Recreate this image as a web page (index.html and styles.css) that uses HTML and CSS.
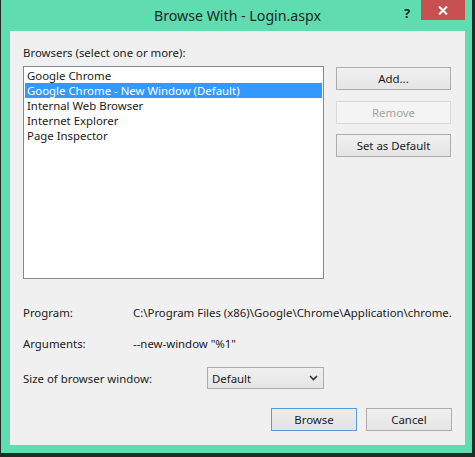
FILE: index.html
```html
<!DOCTYPE html>
<html lang="en">
<head>
    <meta charset="UTF-8">
    <title>Browse With - Login.aspx</title>
<link rel="stylesheet" href="styles.css">
</head>
<body>
    <div class="window">
        <div class="titlebar">
            <span></span>
            <div class="title">Browse With - Login.aspx</div>
            <div class="caption-buttons">
                <span class="help">?</span>
                <span class="close">
                    <svg width="10" height="9" viewBox="0 0 10 9">
                        <path d="M1 0.5 L9 8.5 M9 0.5 L1 8.5" stroke="#fff" stroke-width="2" fill="none"/>
                    </svg>
                </span>
            </div>
        </div>

        <div class="client">
            <div class="label">Browsers (select one or more):</div>

            <div class="browsers">
                <ul class="listbox">
                    <li>Google Chrome</li>
                    <li class="selected">Google Chrome - New Window (Default)</li>
                    <li>Internal Web Browser</li>
                    <li>Internet Explorer</li>
                    <li>Page Inspector</li>
                </ul>
                <div class="side-buttons">
                    <button class="btn add">Add...</button>
                    <button class="btn remove" disabled>Remove</button>
                    <button class="btn set-default">Set as Default</button>
                </div>
            </div>

            <div class="fields">
                <div class="field program">
                    <span class="field-label">Program:</span>
                    <span class="field-value">C:\Program Files (x86)\Google\Chrome\Application\chrome.</span>
                </div>
                <div class="field arguments">
                    <span class="field-label">Arguments:</span>
                    <span class="field-value">--new-window "%1"</span>
                </div>
                <div class="field size">
                    <span class="field-label">Size of browser window:</span>
                    <div class="combo">
                        <span>Default</span>
                        <svg width="9" height="6" viewBox="0 0 9 6">
                            <path d="M1 1 L4.5 4.5 L8 1" stroke="#333" stroke-width="1.6" fill="none"/>
                        </svg>
                    </div>
                </div>
            </div>

            <div class="footer">
                <button class="btn primary">Browse</button>
                <button class="btn">Cancel</button>
            </div>
        </div>
    </div>
</body>
</html>
```

FILE: styles.css
```css
/* dialog chrome */
body {
    margin: 0;
    width: 475px;
    height: 457px;
    background-color: #1f2d27;
    font-family: 'Noto Sans', 'Open Sans', sans-serif;
    font-size: 11.4px;
    color: #1a1a1a;
    overflow: hidden;
}

.window {
    margin-left: 1px;
    width: 471px;
    height: 453px;
    box-sizing: border-box;
    padding: 0 7px 0 9px;
    background-color: #5fdcb0;
}

.titlebar {
    height: 31px;
    display: grid;
    grid-template-columns: 1fr auto 1fr;
    align-items: start;
}

.title {
    font-size: 14.2px;
    line-height: 31px;
    color: #1c2b25;
}

.caption-buttons {
    justify-self: end;
    display: flex;
    align-items: flex-start;
}

.help {
    width: 28px;
    padding-top: 4px;
    text-align: center;
    font-weight: bold;
    font-size: 13px;
    color: #1c2b25;
}

.close {
    width: 44px;
    height: 20px;
    background-color: #c75050;
    display: flex;
    align-items: center;
    justify-content: center;
}

/* client area */
.client {
    height: 414px;
    box-sizing: border-box;
    padding: 14px 13px 0 12px;
    background-color: #f0f0f0;
    border-left: 1px solid #f7fbf9;
}

.label {
    line-height: 15px;
}

.browsers {
    display: flex;
    gap: 12px;
    margin-top: 6px;
}

.listbox {
    list-style: none;
    margin: 0;
    padding: 1px;
    width: 301px;
    height: 213px;
    box-sizing: border-box;
    border: 1px solid #828790;
    background-color: #fff;
}

.listbox li {
    line-height: 15px;
    padding-left: 2px;
    white-space: nowrap;
}

.listbox li.selected {
    background-color: #3399ff;
    color: #fff;
}

.side-buttons {
    display: flex;
    flex-direction: column;
    gap: 10px;
    padding-top: 1px;
}

.btn {
    font-family: inherit;
    font-size: 11.4px;
    color: #1a1a1a;
    height: 23px;
    padding: 0;
    border: 1px solid #acacac;
    background: linear-gradient(#f0f0f0, #e5e5e5);
}

.side-buttons .btn {
    width: 115px;
}

.btn.remove {
    margin-top: 1px;
}

.btn:disabled {
    color: #a3a3a3;
    border-color: #d9d9d9;
    background: #f4f4f4;
}

.btn.primary {
    border-color: #5b9bd5;
    background: linear-gradient(#ececec, #e4e4e4);
}

/* program details */
.fields {
    margin-top: 26px;
    display: flex;
    flex-direction: column;
    gap: 16px;
}

.field {
    display: flex;
    align-items: center;
    line-height: 15px;
}

.field-label {
    flex: none;
}

.program .field-label,
.arguments .field-label {
    width: 110px;
}

.field-value {
    white-space: nowrap;
}

.size .field-label {
    width: 184px;
}

.combo {
    width: 117px;
    height: 22px;
    box-sizing: border-box;
    border: 1px solid #acacac;
    background: linear-gradient(#f0f0f0, #e5e5e5);
    display: flex;
    align-items: center;
    justify-content: space-between;
    padding: 0 5px 0 4px;
}

.footer {
    margin-top: 19px;
    display: flex;
    justify-content: flex-end;
    gap: 9px;
}

.footer .btn {
    width: 86px;
}
```
